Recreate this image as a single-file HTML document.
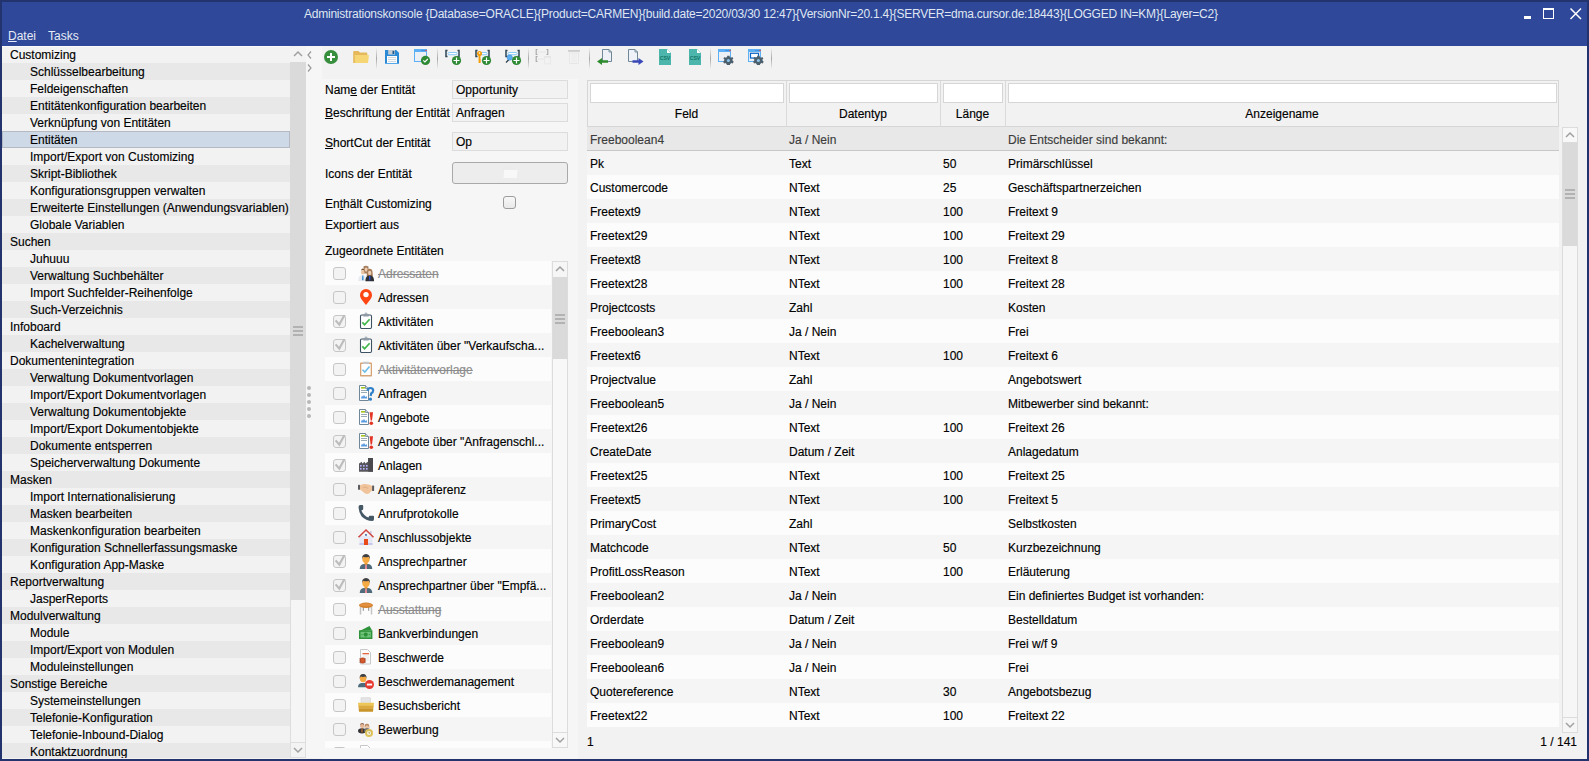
<!DOCTYPE html><html><head><meta charset='utf-8'><style>
*{box-sizing:border-box}
html,body{margin:0;padding:0}
body{width:1589px;height:761px;overflow:hidden;position:relative;background:#22336e;font-family:"Liberation Sans", sans-serif;font-size:12px;color:#000;-webkit-text-stroke-width:0.15px}
.a{position:absolute}
.t{position:absolute;white-space:nowrap;line-height:17px}
.tr{position:absolute;left:2px;width:288px;height:17px}
.lr{position:absolute;left:325px;width:226px;height:24px}
.cb{position:absolute;left:8px;top:6px;width:13px;height:13px;border:1px solid #c6c6c6;border-radius:3px;background:#f3f3f3}
.ic{position:absolute;left:33px;top:4px;width:16px;height:16px}
.lt{position:absolute;left:53px;top:0;line-height:24px;padding-top:1px;white-space:nowrap}
.strike{color:#8c8c8c;text-decoration:line-through;text-decoration-color:#8c8c8c}
.gr{position:absolute;left:587px;width:972px;height:24px}
.gt{position:absolute;top:0;line-height:24px;padding-top:1px;white-space:nowrap}
.sep{position:absolute;top:48px;width:1px;height:21px;background:linear-gradient(#f0f0f0,#a8a8a8 50%,#f0f0f0)}
</style></head><body>
<div class='a' style='left:2px;top:2px;width:1585px;height:44px;background:#2f4899'></div>
<div class='t' style='left:304px;top:6px;font-size:12px;letter-spacing:-0.23px;color:#dfe6f2;-webkit-text-stroke-width:0'>Administrationskonsole {Database=ORACLE}{Product=CARMEN}{build.date=2020/03/30 12:47}{VersionNr=20.1.4}{SERVER=dma.cursor.de:18443}{LOGGED IN=KM}{Layer=C2}</div>
<div class='a' style='left:1524px;top:16px;width:7px;height:3px;background:#fff'></div>
<div class='a' style='left:1543px;top:8px;width:11px;height:11px;border:1px solid #fff;border-top-width:2px'></div>
<svg class='a' style='left:1569px;top:7px' width='13' height='13' viewBox='0 0 13 13'><path d='M1.5 1.5L12 12M12 1.5L1.5 12' stroke='#fff' stroke-width='1.5'/></svg>
<div class='t' style='left:8px;top:28px;color:#e6ebf5;-webkit-text-stroke-width:0'><span style='text-decoration:underline'>D</span>atei</div>
<div class='t' style='left:48px;top:28px;color:#e6ebf5;-webkit-text-stroke-width:0'>Tasks</div>
<div class='a' style='left:2px;top:46px;width:1585px;height:713px;background:#f2f2f2'></div>
<div class='a' style='left:2px;top:46px;width:288px;height:712px;overflow:hidden'>
<div class='a' style='left:0;top:0px;width:288px;height:17px;background:#f2f2f2;'></div>
<div class='t' style='left:8px;top:1px'>Customizing</div>
<div class='a' style='left:0;top:17px;width:288px;height:17px;background:#e8e8e8;'></div>
<div class='t' style='left:28px;top:18px'>Schlüsselbearbeitung</div>
<div class='a' style='left:0;top:34px;width:288px;height:17px;background:#f2f2f2;'></div>
<div class='t' style='left:28px;top:35px'>Feldeigenschaften</div>
<div class='a' style='left:0;top:51px;width:288px;height:17px;background:#e8e8e8;'></div>
<div class='t' style='left:28px;top:52px'>Entitätenkonfiguration bearbeiten</div>
<div class='a' style='left:0;top:68px;width:288px;height:17px;background:#f2f2f2;'></div>
<div class='t' style='left:28px;top:69px'>Verknüpfung von Entitäten</div>
<div class='a' style='left:0;top:85px;width:288px;height:17px;background:#cdd9e7;border:1px solid #b4b9c2;'></div>
<div class='t' style='left:28px;top:86px'>Entitäten</div>
<div class='a' style='left:0;top:102px;width:288px;height:17px;background:#f2f2f2;'></div>
<div class='t' style='left:28px;top:103px'>Import/Export von Customizing</div>
<div class='a' style='left:0;top:119px;width:288px;height:17px;background:#e8e8e8;'></div>
<div class='t' style='left:28px;top:120px'>Skript-Bibliothek</div>
<div class='a' style='left:0;top:136px;width:288px;height:17px;background:#f2f2f2;'></div>
<div class='t' style='left:28px;top:137px'>Konfigurationsgruppen verwalten</div>
<div class='a' style='left:0;top:153px;width:288px;height:17px;background:#e8e8e8;'></div>
<div class='t' style='left:28px;top:154px'>Erweiterte Einstellungen (Anwendungsvariablen)</div>
<div class='a' style='left:0;top:170px;width:288px;height:17px;background:#f2f2f2;'></div>
<div class='t' style='left:28px;top:171px'>Globale Variablen</div>
<div class='a' style='left:0;top:187px;width:288px;height:17px;background:#e8e8e8;'></div>
<div class='t' style='left:8px;top:188px'>Suchen</div>
<div class='a' style='left:0;top:204px;width:288px;height:17px;background:#f2f2f2;'></div>
<div class='t' style='left:28px;top:205px'>Juhuuu</div>
<div class='a' style='left:0;top:221px;width:288px;height:17px;background:#e8e8e8;'></div>
<div class='t' style='left:28px;top:222px'>Verwaltung Suchbehälter</div>
<div class='a' style='left:0;top:238px;width:288px;height:17px;background:#f2f2f2;'></div>
<div class='t' style='left:28px;top:239px'>Import Suchfelder-Reihenfolge</div>
<div class='a' style='left:0;top:255px;width:288px;height:17px;background:#e8e8e8;'></div>
<div class='t' style='left:28px;top:256px'>Such-Verzeichnis</div>
<div class='a' style='left:0;top:272px;width:288px;height:17px;background:#f2f2f2;'></div>
<div class='t' style='left:8px;top:273px'>Infoboard</div>
<div class='a' style='left:0;top:289px;width:288px;height:17px;background:#e8e8e8;'></div>
<div class='t' style='left:28px;top:290px'>Kachelverwaltung</div>
<div class='a' style='left:0;top:306px;width:288px;height:17px;background:#f2f2f2;'></div>
<div class='t' style='left:8px;top:307px'>Dokumentenintegration</div>
<div class='a' style='left:0;top:323px;width:288px;height:17px;background:#e8e8e8;'></div>
<div class='t' style='left:28px;top:324px'>Verwaltung Dokumentvorlagen</div>
<div class='a' style='left:0;top:340px;width:288px;height:17px;background:#f2f2f2;'></div>
<div class='t' style='left:28px;top:341px'>Import/Export Dokumentvorlagen</div>
<div class='a' style='left:0;top:357px;width:288px;height:17px;background:#e8e8e8;'></div>
<div class='t' style='left:28px;top:358px'>Verwaltung Dokumentobjekte</div>
<div class='a' style='left:0;top:374px;width:288px;height:17px;background:#f2f2f2;'></div>
<div class='t' style='left:28px;top:375px'>Import/Export Dokumentobjekte</div>
<div class='a' style='left:0;top:391px;width:288px;height:17px;background:#e8e8e8;'></div>
<div class='t' style='left:28px;top:392px'>Dokumente entsperren</div>
<div class='a' style='left:0;top:408px;width:288px;height:17px;background:#f2f2f2;'></div>
<div class='t' style='left:28px;top:409px'>Speicherverwaltung Dokumente</div>
<div class='a' style='left:0;top:425px;width:288px;height:17px;background:#e8e8e8;'></div>
<div class='t' style='left:8px;top:426px'>Masken</div>
<div class='a' style='left:0;top:442px;width:288px;height:17px;background:#f2f2f2;'></div>
<div class='t' style='left:28px;top:443px'>Import Internationalisierung</div>
<div class='a' style='left:0;top:459px;width:288px;height:17px;background:#e8e8e8;'></div>
<div class='t' style='left:28px;top:460px'>Masken bearbeiten</div>
<div class='a' style='left:0;top:476px;width:288px;height:17px;background:#f2f2f2;'></div>
<div class='t' style='left:28px;top:477px'>Maskenkonfiguration bearbeiten</div>
<div class='a' style='left:0;top:493px;width:288px;height:17px;background:#e8e8e8;'></div>
<div class='t' style='left:28px;top:494px'>Konfiguration Schnellerfassungsmaske</div>
<div class='a' style='left:0;top:510px;width:288px;height:17px;background:#f2f2f2;'></div>
<div class='t' style='left:28px;top:511px'>Konfiguration App-Maske</div>
<div class='a' style='left:0;top:527px;width:288px;height:17px;background:#e8e8e8;'></div>
<div class='t' style='left:8px;top:528px'>Reportverwaltung</div>
<div class='a' style='left:0;top:544px;width:288px;height:17px;background:#f2f2f2;'></div>
<div class='t' style='left:28px;top:545px'>JasperReports</div>
<div class='a' style='left:0;top:561px;width:288px;height:17px;background:#e8e8e8;'></div>
<div class='t' style='left:8px;top:562px'>Modulverwaltung</div>
<div class='a' style='left:0;top:578px;width:288px;height:17px;background:#f2f2f2;'></div>
<div class='t' style='left:28px;top:579px'>Module</div>
<div class='a' style='left:0;top:595px;width:288px;height:17px;background:#e8e8e8;'></div>
<div class='t' style='left:28px;top:596px'>Import/Export von Modulen</div>
<div class='a' style='left:0;top:612px;width:288px;height:17px;background:#f2f2f2;'></div>
<div class='t' style='left:28px;top:613px'>Moduleinstellungen</div>
<div class='a' style='left:0;top:629px;width:288px;height:17px;background:#e8e8e8;'></div>
<div class='t' style='left:8px;top:630px'>Sonstige Bereiche</div>
<div class='a' style='left:0;top:646px;width:288px;height:17px;background:#f2f2f2;'></div>
<div class='t' style='left:28px;top:647px'>Systemeinstellungen</div>
<div class='a' style='left:0;top:663px;width:288px;height:17px;background:#e8e8e8;'></div>
<div class='t' style='left:28px;top:664px'>Telefonie-Konfiguration</div>
<div class='a' style='left:0;top:680px;width:288px;height:17px;background:#f2f2f2;'></div>
<div class='t' style='left:28px;top:681px'>Telefonie-Inbound-Dialog</div>
<div class='a' style='left:0;top:697px;width:288px;height:17px;background:#e8e8e8;'></div>
<div class='t' style='left:28px;top:698px'>Kontaktzuordnung</div>
<div class='a' style='left:0;top:0;width:288px;height:1px;background:#fafafa'></div>
</div>
<div class='a' style='left:290px;top:46px;width:16px;height:712px;background:#f5f5f5;border-left:1px solid #dedede;border-right:1px solid #dedede'></div>
<div class='a' style='left:290px;top:46px;width:16px;height:16px;background:#f3f3f3'></div>
<svg class='a' style='left:290px;top:46px' width='16' height='16'><path d='M4 10L8 6L12 10' fill='none' stroke='#a0a0a0' stroke-width='1.5'/></svg>
<div class='a' style='left:290px;top:62px;width:16px;height:538px;background:#dadada'></div>
<div class='a' style='left:293px;top:326px;width:10px;height:2px;background:#b2b2b2'></div>
<div class='a' style='left:293px;top:330px;width:10px;height:2px;background:#b2b2b2'></div>
<div class='a' style='left:293px;top:334px;width:10px;height:2px;background:#b2b2b2'></div>
<div class='a' style='left:290px;top:742px;width:16px;height:16px;background:#f3f3f3;border:1px solid #dedede'></div>
<svg class='a' style='left:290px;top:742px' width='16' height='16'><path d='M4 6L8 10L12 6' fill='none' stroke='#a0a0a0' stroke-width='1.5'/></svg>
<div class='a' style='left:306px;top:46px;width:16px;height:712px;background:#f6f6f6'></div>
<svg class='a' style='left:306px;top:50px' width='8' height='24'><path d='M5 1.5L2 5L5 8.5M2 14.5L5 18L2 21.5' fill='none' stroke='#9a9a9a' stroke-width='1.2'/></svg>
<div class='a' style='left:307px;top:386px;width:4px;height:4px;border-radius:2px;background:#b8b8b8'></div>
<div class='a' style='left:307px;top:393px;width:4px;height:4px;border-radius:2px;background:#b8b8b8'></div>
<div class='a' style='left:307px;top:400px;width:4px;height:4px;border-radius:2px;background:#b8b8b8'></div>
<div class='a' style='left:307px;top:407px;width:4px;height:4px;border-radius:2px;background:#b8b8b8'></div>
<div class='a' style='left:307px;top:414px;width:4px;height:4px;border-radius:2px;background:#b8b8b8'></div>
<div class='a' style='left:322px;top:79px;width:256px;height:680px;background:#f6f6f6'></div>
<div class='t' style='left:325px;top:82px'>Nam<u>e</u> der Entität</div>
<div class='t' style='left:325px;top:105px'><u>B</u>eschriftung der Entität</div>
<div class='t' style='left:325px;top:135px'><u>S</u>hortCut der Entität</div>
<div class='t' style='left:325px;top:166px'>Icons der Entität</div>
<div class='t' style='left:325px;top:196px'>En<u>t</u>hält Customizing</div>
<div class='t' style='left:325px;top:217px'>Exportiert aus</div>
<div class='t' style='left:325px;top:243px'>Zugeordnete Entitäten</div>
<div class='a' style='left:452px;top:80px;width:116px;height:19px;border:1px solid #dcdcdc;background:#f2f2f2'></div>
<div class='t' style='left:456px;top:82px'>Opportunity</div>
<div class='a' style='left:452px;top:103px;width:116px;height:19px;border:1px solid #dcdcdc;background:#f2f2f2'></div>
<div class='t' style='left:456px;top:105px'>Anfragen</div>
<div class='a' style='left:452px;top:132px;width:116px;height:19px;border:1px solid #dcdcdc;background:#f2f2f2'></div>
<div class='t' style='left:456px;top:134px'>Op</div>
<div class='a' style='left:452px;top:162px;width:116px;height:22px;border:1px solid #a9a9a9;border-radius:3px;background:#ededed'></div>
<svg class='a' style='left:502px;top:166px' width='16' height='12'><path d='M0.5 0.5H6L7 1.8H13V12H0.5Z' fill='#ececec'/><path d='M2 4H15.5L14.8 12H1.5Z' fill='#f8f8f8'/></svg>
<div class='a' style='left:503px;top:196px;width:13px;height:13px;border:1px solid #9c9c9c;border-radius:3px;background:linear-gradient(#f8f8f8,#e9e9e9)'></div>
<div class='a' style='left:325px;top:261px;width:226px;height:487px;overflow:hidden'>
<div class='a' style='left:0;top:0px;width:226px;height:24px;background:#fcfcfc'>
<div class='cb'></div>
<div class='ic'><svg width='16' height='16' viewBox='0 0 16 16' style='overflow:visible'><path d='M5.6 1.3Q8.2 0.2 10.4 1.6L10.8 8.5H5.4Z' fill='#a57c5a'/><ellipse cx='8.1' cy='4.6' rx='1.6' ry='2.1' fill='#eccbb0'/><path d='M0.2 16Q0.3 10.8 3.5 10.2H6Q8.7 10.8 8.8 16Z' fill='#e7eaee'/><path d='M4.2 10.4H5.4L5.6 15.2H4Z' fill='#3d8fd3'/><path d='M2.9 6.3Q3 3.6 4.8 3.6Q6.6 3.6 6.6 6.3L6.2 5.2Q4.8 4.6 3.4 5.2Z' fill='#7b5536'/><ellipse cx='4.75' cy='7.2' rx='1.7' ry='2.2' fill='#e9c3a2'/><path d='M9 6.8Q9.4 3.8 11.7 3.8Q14.2 3.8 14.5 6.8L14.8 11H8.7Z' fill='#a87d58'/><ellipse cx='11.7' cy='7.9' rx='1.6' ry='2.2' fill='#efcdb2'/><path d='M7.4 16.2Q7.5 11.2 10.5 10.6H13Q16 11.2 16.1 16.2Z' fill='#2e2f33'/><path d='M11 10.9H12.5L12.3 15.5H11.2Z' fill='#2b4fd0'/></svg></div>
<div class='lt strike'>Adressaten</div>
</div>
<div class='a' style='left:0;top:24px;width:226px;height:24px;background:#f5f5f5'>
<div class='cb'></div>
<div class='ic'><svg width='16' height='16' viewBox='0 0 16 16' style='overflow:visible'><path d='M8 16C4.6 11.6 2 9.2 2 6A6 6 0 0 1 14 6C14 9.2 11.4 11.6 8 16Z' fill='#ff4512'/><circle cx='8' cy='5.6' r='2.7' fill='#fff'/></svg></div>
<div class='lt'>Adressen</div>
</div>
<div class='a' style='left:0;top:48px;width:226px;height:24px;background:#fcfcfc'>
<div class='cb'></div>
<svg class='a' style='left:8px;top:6px' width='14' height='14' style='overflow:visible'><path d='M2.6 5.4L6.3 9.6L11.8 -0.6' fill='none' stroke='#bcbcbc' stroke-width='2.1'/></svg>
<div class='ic'><svg width='16' height='16' viewBox='0 0 16 16' style='overflow:visible'><rect x='2.5' y='2' width='11' height='13.5' rx='1.2' fill='#fff' stroke='#3f5262' stroke-width='1.1'/><rect x='5' y='1.2' width='6' height='2.3' rx='0.8' fill='#8e9ba6'/><circle cx='8' cy='1.2' r='1.2' fill='none' stroke='#8e9ba6' stroke-width='0.9'/><path d='M4.3 9.3L6.6 11.7L11.6 6.2' fill='none' stroke='#3fb54a' stroke-width='1.7'/></svg></div>
<div class='lt'>Aktivitäten</div>
</div>
<div class='a' style='left:0;top:72px;width:226px;height:24px;background:#f5f5f5'>
<div class='cb'></div>
<svg class='a' style='left:8px;top:6px' width='14' height='14' style='overflow:visible'><path d='M2.6 5.4L6.3 9.6L11.8 -0.6' fill='none' stroke='#bcbcbc' stroke-width='2.1'/></svg>
<div class='ic'><svg width='16' height='16' viewBox='0 0 16 16' style='overflow:visible'><rect x='2.5' y='2' width='11' height='13.5' rx='1.2' fill='#fff' stroke='#3f5262' stroke-width='1.1'/><rect x='5' y='1.2' width='6' height='2.3' rx='0.8' fill='#8e9ba6'/><circle cx='8' cy='1.2' r='1.2' fill='none' stroke='#8e9ba6' stroke-width='0.9'/><path d='M4.3 9.3L6.6 11.7L11.6 6.2' fill='none' stroke='#3fb54a' stroke-width='1.7'/></svg></div>
<div class='lt'>Aktivitäten über &quot;Verkaufscha...</div>
</div>
<div class='a' style='left:0;top:96px;width:226px;height:24px;background:#fcfcfc'>
<div class='cb'></div>
<div class='ic'><svg width='16' height='16' viewBox='0 0 16 16' style='overflow:visible'><g opacity='0.7'><rect x='2' y='1.5' width='12' height='14' rx='0.8' fill='#c8803e'/><rect x='3.3' y='3' width='9.4' height='11' fill='#fff'/><rect x='5' y='0.8' width='6' height='2.2' fill='#b0b0b0'/><path d='M4.5 8.7L6.8 11L11.5 5.5' fill='none' stroke='#2ea3e0' stroke-width='1.6'/></g></svg></div>
<div class='lt strike'>Aktivitätenvorlage</div>
</div>
<div class='a' style='left:0;top:120px;width:226px;height:24px;background:#f5f5f5'>
<div class='cb'></div>
<div class='ic'><svg width='16' height='16' viewBox='0 0 16 16' style='overflow:visible'><path d='M1.5 0.5H7.5L10.5 3.5V15.5H1.5Z' fill='#fff' stroke='#6f8796'/><path d='M7.5 0.5V3.5H10.5' fill='#c9d3da' stroke='#6f8796' stroke-width='0.8'/><rect x='3' y='2' width='4' height='1.6' fill='#a4c41e'/><path d='M3 5.5H9M3 7.5H9' stroke='#8fa2ae' stroke-width='0.9'/><path d='M2.8 13.5L4 10.5L5 11.8L6 9.8L7.2 12L8.5 11L9.3 13.5Z' fill='#5a9ae0'/><path d='M9.6 5.8Q9.8 3 12.4 3Q15.2 3 15.2 5.6Q15.2 7.5 13.2 8.4L12.6 11' fill='none' stroke='#2f80c8' stroke-width='2.2'/><circle cx='12.4' cy='14.2' r='1.6' fill='#2f80c8'/></svg></div>
<div class='lt'>Anfragen</div>
</div>
<div class='a' style='left:0;top:144px;width:226px;height:24px;background:#fcfcfc'>
<div class='cb'></div>
<div class='ic'><svg width='16' height='16' viewBox='0 0 16 16' style='overflow:visible'><path d='M1.5 0.5H7.5L10.5 3.5V15.5H1.5Z' fill='#fff' stroke='#6f8796'/><path d='M7.5 0.5V3.5H10.5' fill='#c9d3da' stroke='#6f8796' stroke-width='0.8'/><rect x='3' y='2' width='4' height='1.6' fill='#a4c41e'/><path d='M3 5.5H9M3 7.5H9' stroke='#8fa2ae' stroke-width='0.9'/><path d='M2.8 13.5L4 10.5L5 11.8L6 9.8L7.2 12L8.5 11L9.3 13.5Z' fill='#5a9ae0'/><path d='M11.6 3.2H15L14 11.6H12.6Z' fill='#e53324'/><circle cx='13.3' cy='14.2' r='1.8' fill='#e53324'/></svg></div>
<div class='lt'>Angebote</div>
</div>
<div class='a' style='left:0;top:168px;width:226px;height:24px;background:#f5f5f5'>
<div class='cb'></div>
<svg class='a' style='left:8px;top:6px' width='14' height='14' style='overflow:visible'><path d='M2.6 5.4L6.3 9.6L11.8 -0.6' fill='none' stroke='#bcbcbc' stroke-width='2.1'/></svg>
<div class='ic'><svg width='16' height='16' viewBox='0 0 16 16' style='overflow:visible'><path d='M1.5 0.5H7.5L10.5 3.5V15.5H1.5Z' fill='#fff' stroke='#6f8796'/><path d='M7.5 0.5V3.5H10.5' fill='#c9d3da' stroke='#6f8796' stroke-width='0.8'/><rect x='3' y='2' width='4' height='1.6' fill='#a4c41e'/><path d='M3 5.5H9M3 7.5H9' stroke='#8fa2ae' stroke-width='0.9'/><path d='M2.8 13.5L4 10.5L5 11.8L6 9.8L7.2 12L8.5 11L9.3 13.5Z' fill='#5a9ae0'/><path d='M11.6 3.2H15L14 11.6H12.6Z' fill='#e53324'/><circle cx='13.3' cy='14.2' r='1.8' fill='#e53324'/></svg></div>
<div class='lt'>Angebote über &quot;Anfragenschl...</div>
</div>
<div class='a' style='left:0;top:192px;width:226px;height:24px;background:#fcfcfc'>
<div class='cb'></div>
<svg class='a' style='left:8px;top:6px' width='14' height='14' style='overflow:visible'><path d='M2.6 5.4L6.3 9.6L11.8 -0.6' fill='none' stroke='#bcbcbc' stroke-width='2.1'/></svg>
<div class='ic'><svg width='16' height='16' viewBox='0 0 16 16' style='overflow:visible'><path d='M1 14.7V6.4L4 4.8V6.4L7 4.8V6.4L10 4.8V1H15V14.7Z' fill='#58585c'/><rect x='10.3' y='1' width='4.7' height='13.7' fill='#4a4a4e'/><g fill='#b4b0ff'><rect x='2' y='8' width='1.6' height='1.6'/><rect x='5' y='8' width='1.6' height='1.6'/><rect x='8' y='8' width='1.6' height='1.6'/><rect x='2' y='11' width='1.6' height='1.6'/><rect x='5' y='11' width='1.6' height='1.6'/><rect x='8' y='11' width='1.6' height='1.6'/></g></svg></div>
<div class='lt'>Anlagen</div>
</div>
<div class='a' style='left:0;top:216px;width:226px;height:24px;background:#f5f5f5'>
<div class='cb'></div>
<div class='ic'><svg width='16' height='16' viewBox='0 0 16 16' style='overflow:visible'><path d='M1.5 4.5L5.5 3Q8 2.6 10.5 3.5L14.5 5V9L11 12.5Q8.5 13.5 6.5 12L1.5 8Z' fill='#f0c39a'/><path d='M5 6.5Q8 5 10 7.5' fill='none' stroke='#d9a57a' stroke-width='0.7'/><rect x='0' y='3.8' width='2' height='5' rx='0.6' fill='#5b5b5f'/><rect x='14.1' y='4.6' width='2' height='5.4' rx='0.6' fill='#5b5b5f'/></svg></div>
<div class='lt'>Anlagepräferenz</div>
</div>
<div class='a' style='left:0;top:240px;width:226px;height:24px;background:#fcfcfc'>
<div class='cb'></div>
<div class='ic'><svg width='16' height='16' viewBox='0 0 16 16' style='overflow:visible'><path d='M0.6 1.6Q0.6 0 2.2 0H4.4Q5.2 0 5.2 0.9V4Q5.2 5 4 5.2L3.3 5.4Q5.6 10.4 10.4 12.6L10.7 11.9Q11 10.7 12 10.7H15.1Q16 10.7 16 11.6V13.9Q16 15.9 14.4 15.9Q7.8 15.9 3.5 11.2Q0.6 7.4 0.6 1.6Z' fill='#455866'/></svg></div>
<div class='lt'>Anrufprotokolle</div>
</div>
<div class='a' style='left:0;top:264px;width:226px;height:24px;background:#f5f5f5'>
<div class='cb'></div>
<div class='ic'><svg width='16' height='16' viewBox='0 0 16 16' style='overflow:visible'><rect x='1.5' y='7' width='13' height='9' fill='#e6e8f6'/><rect x='1.5' y='14' width='13' height='2' fill='#c7c9ec'/><rect x='12' y='2' width='1.6' height='4' fill='#c8cae6'/><path d='M0.5 8.2L8 1L15.5 8.2' fill='none' stroke='#d24440' stroke-width='1.5'/><rect x='6' y='10' width='4' height='6' fill='#e84a1a'/><circle cx='8' cy='5.9' r='0.9' fill='#1f4fa0'/></svg></div>
<div class='lt'>Anschlussobjekte</div>
</div>
<div class='a' style='left:0;top:288px;width:226px;height:24px;background:#fcfcfc'>
<div class='cb'></div>
<svg class='a' style='left:8px;top:6px' width='14' height='14' style='overflow:visible'><path d='M2.6 5.4L6.3 9.6L11.8 -0.6' fill='none' stroke='#bcbcbc' stroke-width='2.1'/></svg>
<div class='ic'><svg width='16' height='16' viewBox='0 0 16 16' style='overflow:visible'><path d='M1.7 16Q1.9 11.8 5.7 11.1H10.3Q14.1 11.8 14.3 16Z' fill='#4f6b7b'/><path d='M7.2 11.2H8.8L9 16H7Z' fill='#e98e9a'/><rect x='6.5' y='9.3' width='3' height='2.2' fill='#f39c23'/><ellipse cx='8' cy='6.1' rx='3.7' ry='4.1' fill='#f6aa44'/><path d='M4.2 6.2Q3.6 1.3 8 1.1Q12.4 1.3 11.8 6.2Q11.3 3.9 10.4 3.8Q8 4.8 5.3 3.8Q4.6 4.2 4.2 6.2Z' fill='#3d3f42'/></svg></div>
<div class='lt'>Ansprechpartner</div>
</div>
<div class='a' style='left:0;top:312px;width:226px;height:24px;background:#f5f5f5'>
<div class='cb'></div>
<svg class='a' style='left:8px;top:6px' width='14' height='14' style='overflow:visible'><path d='M2.6 5.4L6.3 9.6L11.8 -0.6' fill='none' stroke='#bcbcbc' stroke-width='2.1'/></svg>
<div class='ic'><svg width='16' height='16' viewBox='0 0 16 16' style='overflow:visible'><path d='M1.7 16Q1.9 11.8 5.7 11.1H10.3Q14.1 11.8 14.3 16Z' fill='#4f6b7b'/><path d='M7.2 11.2H8.8L9 16H7Z' fill='#e98e9a'/><rect x='6.5' y='9.3' width='3' height='2.2' fill='#f39c23'/><ellipse cx='8' cy='6.1' rx='3.7' ry='4.1' fill='#f6aa44'/><path d='M4.2 6.2Q3.6 1.3 8 1.1Q12.4 1.3 11.8 6.2Q11.3 3.9 10.4 3.8Q8 4.8 5.3 3.8Q4.6 4.2 4.2 6.2Z' fill='#3d3f42'/></svg></div>
<div class='lt'>Ansprechpartner über &quot;Empfä...</div>
</div>
<div class='a' style='left:0;top:336px;width:226px;height:24px;background:#fcfcfc'>
<div class='cb'></div>
<div class='ic'><svg width='16' height='16' viewBox='0 0 16 16' style='overflow:visible'><path d='M2.5 6V13.6M13.5 6V13.6' stroke='#c4c4c4' stroke-width='1.5'/><path d='M5.3 6V9.8M10.7 6V9.8' stroke='#8a8a8a' stroke-width='1'/><ellipse cx='8' cy='4.3' rx='7' ry='2.7' fill='#d27e2a'/><ellipse cx='8' cy='3.9' rx='6' ry='1.7' fill='#e09040'/></svg></div>
<div class='lt strike'>Ausstattung</div>
</div>
<div class='a' style='left:0;top:360px;width:226px;height:24px;background:#f5f5f5'>
<div class='cb'></div>
<div class='ic'><svg width='16' height='16' viewBox='0 0 16 16' style='overflow:visible'><path d='M1.6 6L11.5 0.9L14 5.3Z' fill='#2d9239'/><rect x='1' y='5.3' width='13.4' height='8.7' fill='#2d9239'/><rect x='2.5' y='6.8' width='10.4' height='5.7' fill='#6fc27a'/><circle cx='7.7' cy='9.6' r='2.1' fill='#2d9239'/><circle cx='4' cy='9.6' r='0.6' fill='#2d9239'/><circle cx='11.4' cy='9.6' r='0.6' fill='#2d9239'/></svg></div>
<div class='lt'>Bankverbindungen</div>
</div>
<div class='a' style='left:0;top:384px;width:226px;height:24px;background:#fcfcfc'>
<div class='cb'></div>
<div class='ic'><svg width='16' height='16' viewBox='0 0 16 16' style='overflow:visible'><path d='M2.5 0.5H9.5L12.5 3.5V15H2.5Z' fill='#fbfbfb' stroke='#c8c8c8'/><rect x='4.5' y='4.1' width='6.5' height='1.2' fill='#e0582e'/><path d='M5 7H11M5 9H11M5 11H11' stroke='#dcdcdc' stroke-width='0.6'/><circle cx='4.6' cy='11.6' r='3' fill='#c24a25'/><path d='M1 9.5L8 13.5M1 13.5L8 9.5' stroke='#6a4030' stroke-width='0.5'/><circle cx='4.6' cy='11.6' r='2' fill='#d45a30'/></svg></div>
<div class='lt'>Beschwerde</div>
</div>
<div class='a' style='left:0;top:408px;width:226px;height:24px;background:#f5f5f5'>
<div class='cb'></div>
<div class='ic'><svg width='16' height='16' viewBox='0 0 16 16' style='overflow:visible'><path d='M0 14.2Q0.2 10.6 3.3 10H6.9Q10 10.6 10.2 14.2Z' fill='#4f6b7b'/><ellipse cx='5.1' cy='5.6' rx='3.3' ry='3.7' fill='#f6aa44'/><path d='M1.7 5.7Q1.2 1.3 5.1 1.1Q9 1.3 8.5 5.7Q8.1 3.7 7.2 3.6Q5.1 4.4 2.8 3.6Q2.1 4 1.7 5.7Z' fill='#3d3f42'/><circle cx='11.5' cy='11.5' r='4.5' fill='#e83a30'/><rect x='8.9' y='10.6' width='5.2' height='1.9' fill='#fff'/></svg></div>
<div class='lt'>Beschwerdemanagement</div>
</div>
<div class='a' style='left:0;top:432px;width:226px;height:24px;background:#fcfcfc'>
<div class='cb'></div>
<div class='ic'><svg width='16' height='16' viewBox='0 0 16 16' style='overflow:visible'><rect x='3' y='0.8' width='9.5' height='6' fill='#e4e4e4' stroke='#c9c9c9' stroke-width='0.5'/><path d='M0 5.8H16L15.7 8.8H0.3Z' fill='#eec656'/><path d='M0.3 8.6H15.7L15.3 11.8H0.7Z' fill='#dcaa3c'/><path d='M0.7 11.6H15.3L15 14.7H1Z' fill='#c99428'/></svg></div>
<div class='lt'>Besuchsbericht</div>
</div>
<div class='a' style='left:0;top:456px;width:226px;height:24px;background:#f5f5f5'>
<div class='cb'></div>
<div class='ic'><svg width='16' height='16' viewBox='0 0 16 16' style='overflow:visible'><ellipse cx='4' cy='9.8' rx='4' ry='2.6' fill='#323438'/><rect x='3.4' y='7.5' width='1.2' height='4' fill='#c86c2a'/><circle cx='4.2' cy='4.8' r='2.3' fill='#e2b696'/><path d='M1.9 4.6A2.3 2.3 0 0 1 6.5 4.6L6.3 3.8Q4.2 2.2 2.1 3.8Z' fill='#6b3a22'/><ellipse cx='9' cy='9.6' rx='3' ry='2.6' fill='#6c6a6a'/><circle cx='9' cy='5' r='2.2' fill='#e6c0a0'/><path d='M6.8 5A2.2 2.2 0 0 1 11.2 5L11.4 8L10.4 4.8Q9 3.8 7.6 4.8L6.6 8Z' fill='#b88458'/><circle cx='11' cy='12' r='4' fill='#e2c455'/><circle cx='11' cy='12' r='2.6' fill='#f4f0d8' stroke='#c8a838' stroke-width='0.6'/><path d='M11 10.8V12.2H12' stroke='#9a8020' stroke-width='0.6' fill='none'/></svg></div>
<div class='lt'>Bewerbung</div>
</div>
<div class='a' style='left:0;top:480px;width:226px;height:24px;background:#fcfcfc'>
<div class='cb'></div>
<div class='ic'><svg width='16' height='16' viewBox='0 0 16 16' style='overflow:visible'><path d='M2.5 0.5H9.5L12.5 3.5V16H2.5Z' fill='#fff' stroke='#c8c8c8'/><path d='M4 3.5H9' stroke='#b0b0b0' stroke-width='0.8'/></svg></div>
<div class='lt'></div>
</div>
</div>
<div class='a' style='left:552px;top:261px;width:16px;height:487px;background:#f8f8f8;border:1px solid #dcdcdc'></div>
<div class='a' style='left:553px;top:262px;width:14px;height:15px;background:#f6f6f6'></div>
<svg class='a' style='left:552px;top:261px' width='16' height='16'><path d='M4 10L8 6L12 10' fill='none' stroke='#a0a0a0' stroke-width='1.5'/></svg>
<div class='a' style='left:553px;top:277px;width:14px;height:82px;background:#dadada'></div>
<div class='a' style='left:555px;top:314px;width:10px;height:2px;background:#b2b2b2'></div>
<div class='a' style='left:555px;top:318px;width:10px;height:2px;background:#b2b2b2'></div>
<div class='a' style='left:555px;top:322px;width:10px;height:2px;background:#b2b2b2'></div>
<div class='a' style='left:552px;top:732px;width:16px;height:16px;border-top:1px solid #dcdcdc'></div>
<svg class='a' style='left:552px;top:732px' width='16' height='16'><path d='M4 6L8 10L12 6' fill='none' stroke='#a0a0a0' stroke-width='1.5'/></svg>
<div class='a' style='left:587px;top:80px;width:972px;height:47px;background:#f2f2f2;border:1px solid #d6d6d6'></div>
<div class='a' style='left:590px;top:83px;width:194px;height:20px;background:#fff;border:1px solid #d6d6d6'></div>
<div class='t' style='left:587px;top:106px;width:199px;text-align:center'>Feld</div>
<div class='a' style='left:786px;top:81px;width:1px;height:46px;background:#dadada'></div>
<div class='a' style='left:789px;top:83px;width:149px;height:20px;background:#fff;border:1px solid #d6d6d6'></div>
<div class='t' style='left:786px;top:106px;width:154px;text-align:center'>Datentyp</div>
<div class='a' style='left:940px;top:81px;width:1px;height:46px;background:#dadada'></div>
<div class='a' style='left:943px;top:83px;width:60px;height:20px;background:#fff;border:1px solid #d6d6d6'></div>
<div class='t' style='left:940px;top:106px;width:65px;text-align:center'>Länge</div>
<div class='a' style='left:1005px;top:81px;width:1px;height:46px;background:#dadada'></div>
<div class='a' style='left:1008px;top:83px;width:549px;height:20px;background:#fff;border:1px solid #d6d6d6'></div>
<div class='t' style='left:1005px;top:106px;width:554px;text-align:center'>Anzeigename</div>
<div class='gr' style='top:127px;background:#e8e8e8;border-bottom:1px solid #c8c8c8;'></div>
<div class='gt' style='left:590px;top:127px;color:#3c3c3c'>Freeboolean4</div>
<div class='gt' style='left:789px;top:127px;color:#3c3c3c'>Ja / Nein</div>
<div class='gt' style='left:943px;top:127px;color:#3c3c3c'></div>
<div class='gt' style='left:1008px;top:127px;color:#3c3c3c'>Die Entscheider sind bekannt:</div>
<div class='gr' style='top:151px;background:#f5f5f5;'></div>
<div class='gt' style='left:590px;top:151px;color:#000'>Pk</div>
<div class='gt' style='left:789px;top:151px;color:#000'>Text</div>
<div class='gt' style='left:943px;top:151px;color:#000'>50</div>
<div class='gt' style='left:1008px;top:151px;color:#000'>Primärschlüssel</div>
<div class='gr' style='top:175px;background:#fcfcfc;'></div>
<div class='gt' style='left:590px;top:175px;color:#000'>Customercode</div>
<div class='gt' style='left:789px;top:175px;color:#000'>NText</div>
<div class='gt' style='left:943px;top:175px;color:#000'>25</div>
<div class='gt' style='left:1008px;top:175px;color:#000'>Geschäftspartnerzeichen</div>
<div class='gr' style='top:199px;background:#f5f5f5;'></div>
<div class='gt' style='left:590px;top:199px;color:#000'>Freetext9</div>
<div class='gt' style='left:789px;top:199px;color:#000'>NText</div>
<div class='gt' style='left:943px;top:199px;color:#000'>100</div>
<div class='gt' style='left:1008px;top:199px;color:#000'>Freitext 9</div>
<div class='gr' style='top:223px;background:#fcfcfc;'></div>
<div class='gt' style='left:590px;top:223px;color:#000'>Freetext29</div>
<div class='gt' style='left:789px;top:223px;color:#000'>NText</div>
<div class='gt' style='left:943px;top:223px;color:#000'>100</div>
<div class='gt' style='left:1008px;top:223px;color:#000'>Freitext 29</div>
<div class='gr' style='top:247px;background:#f5f5f5;'></div>
<div class='gt' style='left:590px;top:247px;color:#000'>Freetext8</div>
<div class='gt' style='left:789px;top:247px;color:#000'>NText</div>
<div class='gt' style='left:943px;top:247px;color:#000'>100</div>
<div class='gt' style='left:1008px;top:247px;color:#000'>Freitext 8</div>
<div class='gr' style='top:271px;background:#fcfcfc;'></div>
<div class='gt' style='left:590px;top:271px;color:#000'>Freetext28</div>
<div class='gt' style='left:789px;top:271px;color:#000'>NText</div>
<div class='gt' style='left:943px;top:271px;color:#000'>100</div>
<div class='gt' style='left:1008px;top:271px;color:#000'>Freitext 28</div>
<div class='gr' style='top:295px;background:#f5f5f5;'></div>
<div class='gt' style='left:590px;top:295px;color:#000'>Projectcosts</div>
<div class='gt' style='left:789px;top:295px;color:#000'>Zahl</div>
<div class='gt' style='left:943px;top:295px;color:#000'></div>
<div class='gt' style='left:1008px;top:295px;color:#000'>Kosten</div>
<div class='gr' style='top:319px;background:#fcfcfc;'></div>
<div class='gt' style='left:590px;top:319px;color:#000'>Freeboolean3</div>
<div class='gt' style='left:789px;top:319px;color:#000'>Ja / Nein</div>
<div class='gt' style='left:943px;top:319px;color:#000'></div>
<div class='gt' style='left:1008px;top:319px;color:#000'>Frei</div>
<div class='gr' style='top:343px;background:#f5f5f5;'></div>
<div class='gt' style='left:590px;top:343px;color:#000'>Freetext6</div>
<div class='gt' style='left:789px;top:343px;color:#000'>NText</div>
<div class='gt' style='left:943px;top:343px;color:#000'>100</div>
<div class='gt' style='left:1008px;top:343px;color:#000'>Freitext 6</div>
<div class='gr' style='top:367px;background:#fcfcfc;'></div>
<div class='gt' style='left:590px;top:367px;color:#000'>Projectvalue</div>
<div class='gt' style='left:789px;top:367px;color:#000'>Zahl</div>
<div class='gt' style='left:943px;top:367px;color:#000'></div>
<div class='gt' style='left:1008px;top:367px;color:#000'>Angebotswert</div>
<div class='gr' style='top:391px;background:#f5f5f5;'></div>
<div class='gt' style='left:590px;top:391px;color:#000'>Freeboolean5</div>
<div class='gt' style='left:789px;top:391px;color:#000'>Ja / Nein</div>
<div class='gt' style='left:943px;top:391px;color:#000'></div>
<div class='gt' style='left:1008px;top:391px;color:#000'>Mitbewerber sind bekannt:</div>
<div class='gr' style='top:415px;background:#fcfcfc;'></div>
<div class='gt' style='left:590px;top:415px;color:#000'>Freetext26</div>
<div class='gt' style='left:789px;top:415px;color:#000'>NText</div>
<div class='gt' style='left:943px;top:415px;color:#000'>100</div>
<div class='gt' style='left:1008px;top:415px;color:#000'>Freitext 26</div>
<div class='gr' style='top:439px;background:#f5f5f5;'></div>
<div class='gt' style='left:590px;top:439px;color:#000'>CreateDate</div>
<div class='gt' style='left:789px;top:439px;color:#000'>Datum / Zeit</div>
<div class='gt' style='left:943px;top:439px;color:#000'></div>
<div class='gt' style='left:1008px;top:439px;color:#000'>Anlagedatum</div>
<div class='gr' style='top:463px;background:#fcfcfc;'></div>
<div class='gt' style='left:590px;top:463px;color:#000'>Freetext25</div>
<div class='gt' style='left:789px;top:463px;color:#000'>NText</div>
<div class='gt' style='left:943px;top:463px;color:#000'>100</div>
<div class='gt' style='left:1008px;top:463px;color:#000'>Freitext 25</div>
<div class='gr' style='top:487px;background:#f5f5f5;'></div>
<div class='gt' style='left:590px;top:487px;color:#000'>Freetext5</div>
<div class='gt' style='left:789px;top:487px;color:#000'>NText</div>
<div class='gt' style='left:943px;top:487px;color:#000'>100</div>
<div class='gt' style='left:1008px;top:487px;color:#000'>Freitext 5</div>
<div class='gr' style='top:511px;background:#fcfcfc;'></div>
<div class='gt' style='left:590px;top:511px;color:#000'>PrimaryCost</div>
<div class='gt' style='left:789px;top:511px;color:#000'>Zahl</div>
<div class='gt' style='left:943px;top:511px;color:#000'></div>
<div class='gt' style='left:1008px;top:511px;color:#000'>Selbstkosten</div>
<div class='gr' style='top:535px;background:#f5f5f5;'></div>
<div class='gt' style='left:590px;top:535px;color:#000'>Matchcode</div>
<div class='gt' style='left:789px;top:535px;color:#000'>NText</div>
<div class='gt' style='left:943px;top:535px;color:#000'>50</div>
<div class='gt' style='left:1008px;top:535px;color:#000'>Kurzbezeichnung</div>
<div class='gr' style='top:559px;background:#fcfcfc;'></div>
<div class='gt' style='left:590px;top:559px;color:#000'>ProfitLossReason</div>
<div class='gt' style='left:789px;top:559px;color:#000'>NText</div>
<div class='gt' style='left:943px;top:559px;color:#000'>100</div>
<div class='gt' style='left:1008px;top:559px;color:#000'>Erläuterung</div>
<div class='gr' style='top:583px;background:#f5f5f5;'></div>
<div class='gt' style='left:590px;top:583px;color:#000'>Freeboolean2</div>
<div class='gt' style='left:789px;top:583px;color:#000'>Ja / Nein</div>
<div class='gt' style='left:943px;top:583px;color:#000'></div>
<div class='gt' style='left:1008px;top:583px;color:#000'>Ein definiertes Budget ist vorhanden:</div>
<div class='gr' style='top:607px;background:#fcfcfc;'></div>
<div class='gt' style='left:590px;top:607px;color:#000'>Orderdate</div>
<div class='gt' style='left:789px;top:607px;color:#000'>Datum / Zeit</div>
<div class='gt' style='left:943px;top:607px;color:#000'></div>
<div class='gt' style='left:1008px;top:607px;color:#000'>Bestelldatum</div>
<div class='gr' style='top:631px;background:#f5f5f5;'></div>
<div class='gt' style='left:590px;top:631px;color:#000'>Freeboolean9</div>
<div class='gt' style='left:789px;top:631px;color:#000'>Ja / Nein</div>
<div class='gt' style='left:943px;top:631px;color:#000'></div>
<div class='gt' style='left:1008px;top:631px;color:#000'>Frei w/f 9</div>
<div class='gr' style='top:655px;background:#fcfcfc;'></div>
<div class='gt' style='left:590px;top:655px;color:#000'>Freeboolean6</div>
<div class='gt' style='left:789px;top:655px;color:#000'>Ja / Nein</div>
<div class='gt' style='left:943px;top:655px;color:#000'></div>
<div class='gt' style='left:1008px;top:655px;color:#000'>Frei</div>
<div class='gr' style='top:679px;background:#f5f5f5;'></div>
<div class='gt' style='left:590px;top:679px;color:#000'>Quotereference</div>
<div class='gt' style='left:789px;top:679px;color:#000'>NText</div>
<div class='gt' style='left:943px;top:679px;color:#000'>30</div>
<div class='gt' style='left:1008px;top:679px;color:#000'>Angebotsbezug</div>
<div class='gr' style='top:703px;background:#fcfcfc;'></div>
<div class='gt' style='left:590px;top:703px;color:#000'>Freetext22</div>
<div class='gt' style='left:789px;top:703px;color:#000'>NText</div>
<div class='gt' style='left:943px;top:703px;color:#000'>100</div>
<div class='gt' style='left:1008px;top:703px;color:#000'>Freitext 22</div>
<div class='a' style='left:1562px;top:127px;width:16px;height:606px;background:#f6f6f6;border:1px solid #dcdcdc'></div>
<div class='a' style='left:1562px;top:127px;width:16px;height:16px;background:#f8f8f8;border:1px solid #dcdcdc'></div>
<svg class='a' style='left:1562px;top:127px' width='16' height='16'><path d='M4 10L8 6L12 10' fill='none' stroke='#a0a0a0' stroke-width='1.5'/></svg>
<div class='a' style='left:1563px;top:143px;width:14px;height:103px;background:#dadada'></div>
<div class='a' style='left:1565px;top:189px;width:10px;height:2px;background:#b2b2b2'></div>
<div class='a' style='left:1565px;top:193px;width:10px;height:2px;background:#b2b2b2'></div>
<div class='a' style='left:1565px;top:197px;width:10px;height:2px;background:#b2b2b2'></div>
<div class='a' style='left:1562px;top:717px;width:16px;height:16px;border-top:1px solid #dcdcdc'></div>
<svg class='a' style='left:1562px;top:717px' width='16' height='16'><path d='M4 6L8 10L12 6' fill='none' stroke='#a0a0a0' stroke-width='1.5'/></svg>
<div class='t' style='left:587px;top:734px'>1</div>
<div class='t' style='left:1477px;top:734px;width:100px;text-align:right'>1 / 141</div>
<div class='sep' style='left:376px'></div>
<div class='sep' style='left:437px'></div>
<div class='sep' style='left:528px'></div>
<div class='sep' style='left:589px'></div>
<div class='sep' style='left:710px'></div>
<div class='sep' style='left:771px'></div>
<svg class='a' style='left:323px;top:49px' width='16' height='16' viewBox='0 0 16 16'><circle cx='8' cy='8' r='7' fill='#378e3c'/><path d='M4 8H12M8 4V12' stroke='#fff' stroke-width='2'/></svg><svg class='a' style='left:353px;top:49px' width='16' height='16' viewBox='0 0 16 16'><path d='M0.2 2.6Q0.2 1.9 1 1.9H5.5L7 3.5H13.5Q14.3 3.5 14.3 4.3V13.9H0.2Z' fill='#e5b95b'/><path d='M1.8 6Q1.8 5.9 2.4 5.9H15.4Q16 5.9 15.9 6.6L15 13.9H1.8Z' fill='#f6d574'/></svg><svg class='a' style='left:384px;top:49px' width='16' height='16' viewBox='0 0 16 16'><path d='M1 1H12.2L15 3.8V15H1Z' fill='#2a8ad6'/><rect x='4.2' y='1' width='6.8' height='4.6' fill='#c5cdd3'/><rect x='8.5' y='1.8' width='1.8' height='3.2' fill='#1d5c90'/><rect x='3' y='7' width='10' height='7' fill='#fff'/><path d='M4 8.6H12M4 10.6H12M4 12.6H12' stroke='#c0c8ce' stroke-width='0.8'/><rect x='1' y='14.2' width='14' height='0.8' fill='#62b0f0'/></svg><svg class='a' style='left:413px;top:48px' width='18' height='18' viewBox='0 0 18 18'><rect x='1.5' y='1.5' width='12' height='12' fill='#eceff3' stroke='#5eb0f4'/><rect x='1' y='1' width='13' height='3' fill='#5eb0f4'/><circle cx='9' cy='2.5' r='0.6' fill='#2a70d0'/><circle cx='11' cy='2.5' r='0.6' fill='#2a70d0'/><circle cx='13' cy='2.5' r='0.7' fill='#e53a30'/></svg><svg class='a' style='left:413px;top:48px' width='18' height='18' viewBox='0 0 18 18'><circle cx='12.5' cy='12.4' r='4.6' fill='#2f8a35'/><path d='M10.3 12.4L11.9 13.9L14.8 11' fill='none' stroke='#fff' stroke-width='1.1'/></svg><svg class='a' style='left:445px;top:48px' width='18' height='18' viewBox='0 0 18 18'><path d='M2.5 2.5H1V8.5H2.5M12.5 2.5H14V8.5H12.5' fill='none' stroke='#2f4657' stroke-width='1.5'/><rect x='3' y='4.5' width='9' height='2.2' rx='1' fill='#fff' stroke='#8ccaf8' stroke-width='1'/><circle cx='11.5' cy='12.5' r='4.6' fill='#2f8a35'/><path d='M8.5 12.5H14.5M11.5 9.5V15.5' stroke='#fff' stroke-width='1.2'/></svg><svg class='a' style='left:475px;top:48px' width='18' height='18' viewBox='0 0 18 18'><path d='M2.5 2.5H1V8.5H2.5M12.5 2.5H14V8.5H12.5' fill='none' stroke='#2f4657' stroke-width='1.5'/><rect x='3' y='4.5' width='9' height='2.2' rx='1' fill='#fff' stroke='#8ccaf8' stroke-width='1'/><path d='M4.5 6.5V15' stroke='#f49f0a' stroke-width='1.9'/><path d='M4.5 12H6M4.5 13.8H5.8' stroke='#f49f0a' stroke-width='1'/><circle cx='4.5' cy='5.5' r='2.5' fill='#f49f0a'/><circle cx='4.5' cy='5' r='0.8' fill='#fff'/><circle cx='11.5' cy='12.5' r='4.6' fill='#2f8a35'/><path d='M8.5 12.5H14.5M11.5 9.5V15.5' stroke='#fff' stroke-width='1.2'/></svg><svg class='a' style='left:505px;top:48px' width='18' height='18' viewBox='0 0 18 18'><path d='M2.5 2.5H1V8.5H2.5M12.5 2.5H14V8.5H12.5' fill='none' stroke='#2f4657' stroke-width='1.5'/><rect x='3' y='4.5' width='9' height='2.2' rx='1' fill='#fff' stroke='#8ccaf8' stroke-width='1'/><path d='M4 11.5L1 14.5' stroke='#2d3e4a' stroke-width='1.2'/><circle cx='4.7' cy='9.5' r='2.7' fill='#5caef0' stroke='#3d8ad0' stroke-width='0.5'/><circle cx='11.5' cy='12.5' r='4.6' fill='#2f8a35'/><path d='M8.5 12.5H14.5M11.5 9.5V15.5' stroke='#fff' stroke-width='1.2'/></svg><svg class='a' style='left:535px;top:48px' width='18' height='18' viewBox='0 0 18 18'><path d='M2.5 1.5H1.2V6.5H2.5M11.5 1.5H12.8V6.5H11.5M2.5 8.5H1.2V13.5H2.5' fill='none' stroke='#a8a8a8' stroke-width='1.1'/><rect x='3' y='3.4' width='8' height='1.5' fill='#eaeaea'/><rect x='3' y='10.4' width='6' height='1.5' fill='#eaeaea'/><rect x='9' y='8.2' width='7' height='1' fill='#e2e2e2'/><rect x='9.6' y='9.6' width='5.8' height='6.2' fill='none' stroke='#e8e8e8' stroke-width='1'/></svg><svg class='a' style='left:567px;top:48px' width='16' height='16' viewBox='0 0 16 16'><rect x='1' y='2' width='12' height='1.8' fill='#cccccc'/><path d='M2.5 5H11.5V15.5H2.5Z' fill='#f4f4f4' stroke='#e6e6e6' stroke-width='1'/><path d='M5 6V14.5M7 6V14.5M9 6V14.5' stroke='#e8e8e8' stroke-width='0.9'/></svg><svg class='a' style='left:596px;top:48px' width='18' height='18' viewBox='0 0 18 18'><path d='M6.5 1.5H13L15.5 4V13.5H6.5Z' fill='#eef2f8' stroke='#6f8796' stroke-width='1'/><path d='M13 1.5V4H15.5' fill='none' stroke='#6f8796' stroke-width='0.9'/><path d='M1 13.5L6 10V12.2H12V14.8H6V17Z' fill='#2e8b2e'/></svg><svg class='a' style='left:627px;top:48px' width='18' height='18' viewBox='0 0 18 18'><path d='M1.5 1.5H8L10.5 4V13.5H1.5Z' fill='#eef2f8' stroke='#6f8796' stroke-width='1'/><path d='M8 1.5V4H10.5' fill='none' stroke='#6f8796' stroke-width='0.9'/><path d='M16.5 13.5L11.5 10V12.2H5.5V14.8H11.5V17Z' fill='#3a48b8'/></svg><svg class='a' style='left:659px;top:49px' width='12' height='16' viewBox='0 0 12 16'><path d='M0 0H8L12 4V16H0Z' fill='#4db6ac'/><path d='M8 0.3V4H11.7Z' fill='#fff'/><text x='6' y='11' font-family='Liberation Sans' font-weight='bold' font-size='5.2' text-anchor='middle' fill='#137566'>CSV</text></svg><svg class='a' style='left:689px;top:49px' width='12' height='16' viewBox='0 0 12 16'><path d='M0 0H8L12 4V16H0Z' fill='#4db6ac'/><path d='M8 0.3V4H11.7Z' fill='#fff'/><text x='6' y='11' font-family='Liberation Sans' font-weight='bold' font-size='5.2' text-anchor='middle' fill='#137566'>CSV</text></svg><svg class='a' style='left:717px;top:48px' width='18' height='18' viewBox='0 0 18 18'><rect x='1.5' y='1.5' width='12' height='12' fill='#eceff3' stroke='#5eb0f4'/><rect x='1' y='1' width='13' height='3' fill='#5eb0f4'/><circle cx='9' cy='2.5' r='0.6' fill='#2a70d0'/><circle cx='11' cy='2.5' r='0.6' fill='#2a70d0'/><circle cx='13' cy='2.5' r='0.7' fill='#e53a30'/><g transform='translate(11.4,12.4)'><path d='M-1.1 -4.6H1.1L1.4 -3.3L2.6 -2.7L3.8 -3.5L5 -2L4 -1L4.3 0.4L5.3 1.4L4.3 3L3 2.6L1.8 3.5L1.5 4.7H-1.5L-1.8 3.5L-3 2.6L-4.3 3L-5.3 1.4L-4.3 0.4L-4 -1L-5 -2L-3.8 -3.5L-2.6 -2.7L-1.4 -3.3Z' fill='#4b5f6d'/><circle r='1.5' fill='#8ec8f0'/></g></svg><svg class='a' style='left:747px;top:48px' width='18' height='18' viewBox='0 0 18 18'><rect x='1.5' y='1.5' width='12' height='12' fill='#eceff3' stroke='#5eb0f4'/><rect x='1' y='1' width='13' height='3' fill='#5eb0f4'/><circle cx='9' cy='2.5' r='0.6' fill='#2a70d0'/><circle cx='11' cy='2.5' r='0.6' fill='#2a70d0'/><circle cx='13' cy='2.5' r='0.7' fill='#e53a30'/><rect x='3.5' y='5.3' width='8' height='4.7' fill='#fff' stroke='#0b62c6' stroke-width='1.2'/><g transform='translate(11.4,12.4)'><path d='M-1.1 -4.6H1.1L1.4 -3.3L2.6 -2.7L3.8 -3.5L5 -2L4 -1L4.3 0.4L5.3 1.4L4.3 3L3 2.6L1.8 3.5L1.5 4.7H-1.5L-1.8 3.5L-3 2.6L-4.3 3L-5.3 1.4L-4.3 0.4L-4 -1L-5 -2L-3.8 -3.5L-2.6 -2.7L-1.4 -3.3Z' fill='#4b5f6d'/><circle r='1.5' fill='#8ec8f0'/></g></svg>
</body></html>
